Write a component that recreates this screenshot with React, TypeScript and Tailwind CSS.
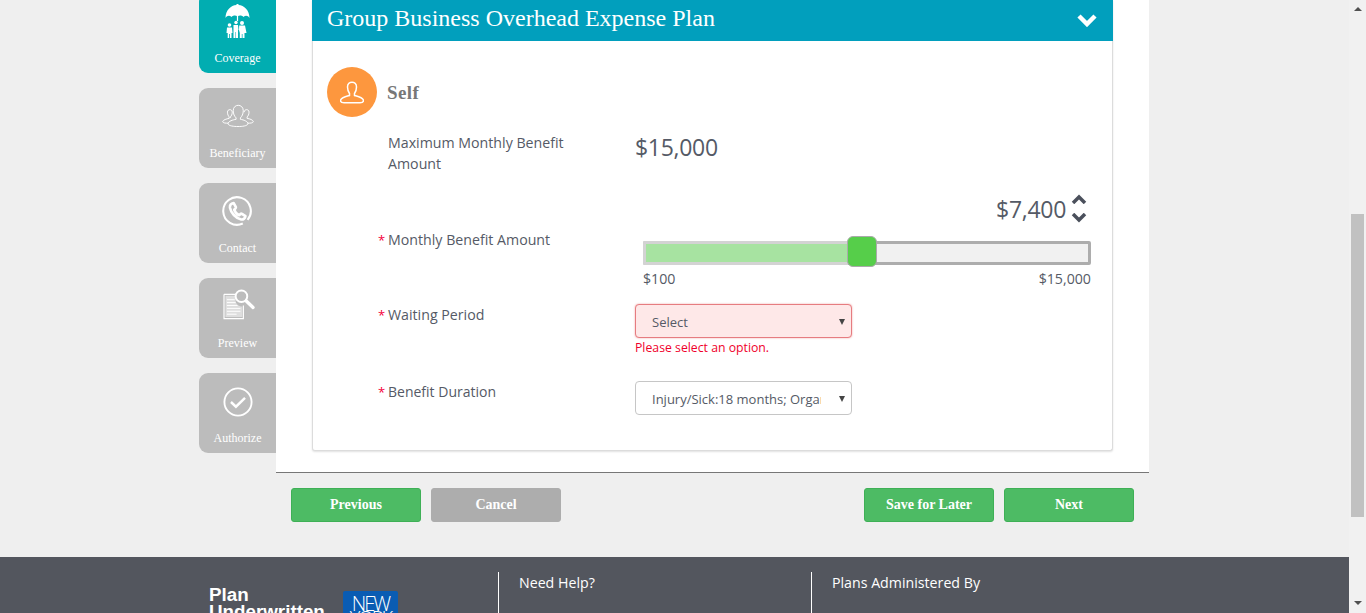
import React from "react";

const serif = "font-['Liberation_Serif','Times_New_Roman',serif]";
const sans = "font-['Open_Sans',sans-serif]";

function Umbrella() {
  return (
    <svg width="25" height="34" viewBox="0 0 25 34" fill="#fff" className="mb-[2px]">
      <path d="M0.500 14 C0.500 6 6 1.500 11.500 1 L11.500 0 L13.500 0 L13.500 1 C19 1.500 24.500 6 24.500 14 C23 11.500 20.500 11 18.500 13 C17 11 14 11 12.500 12.500 C11 11 8 11 6.500 13 C4.500 11 2 11.500 0.500 14 Z" />
      <rect x="11.900" y="12" width="1.200" height="5" />
      <circle cx="4.500" cy="21" r="1.800" />
      <circle cx="11" cy="18.500" r="1.700" />
      <circle cx="17" cy="19" r="2" />
      <path d="M2 23.500 L7 23.500 L7.500 29 L6.500 29 L6.500 34 L5 34 L5 30 L4.200 30 L4.200 34 L2.700 34 L2.700 29 L1.500 29 Z" />
      <path d="M8.500 21 L13 21 L13.500 26 L13 26 L13 34 L11 34 L11 28 L10.500 28 L10.500 34 L8.500 34 Z" />
      <path d="M14.200 21.500 L20 21.500 L21.500 29 L19.500 29 L19.500 34 L17.500 34 L17.500 30 L16.800 30 L16.800 34 L14.800 34 L14.800 29 L14 26 Z" />
    </svg>
  );
}

function People() {
  return (
    <svg width="34" height="23" viewBox="0 0 34 24" fill="none" stroke="#fff" strokeWidth="1" className="mb-[4px]">
      <path d="M6 8.500 C6 5 11 5 11 8.500 C11 11 10 12.500 9 13.500 L9 14.500 M6 8.500 C6 11 7 12.500 7.800 13.500 L7.800 15 C5 15.500 1.500 16.500 1 18.500 C1.500 20 4 20 7 20" />
      <path d="M23.500 8.500 C23.500 5 28.500 5 28.500 8.500 C28.500 11 27.500 12.500 26.500 13.500 L26.500 15 C29.500 15.500 32.500 16.500 33 18.500 C32.500 20 30 20 27 20" />
      <path d="M12 7 C12 -0.500 22.500 -0.500 22.500 7 C22.500 10.500 21 13 19.500 14.500 L19.500 16 C23 16.500 27 18 27.500 20.500 C27 23 21 23.500 17 23.500 C13 23.500 7 23 6.500 20.500 C7 18 11.500 16.500 15 16 L15 14.500 C13.500 13 12 10.500 12 7 Z" />
    </svg>
  );
}

function PhoneCircle() {
  return (
    <svg width="30" height="30" viewBox="0 0 32 32" fill="none" className="mb-[3px] mr-[1px]">
      <path d="M27.300 25.400 A14.700 14.700 0 1 0 22.200 29.300" stroke="#fff" strokeWidth="2.200" />
      <path d="M12.500 7.500 L14.800 11.800 C15.100 12.500 14.700 13 14.200 13.500 L13 14.700 C13.800 17 15.800 19.500 18.300 20.500 L19.700 19.200 C20.200 18.700 20.800 18.700 21.300 19 L25 21.500 C24.500 24 22.500 25.500 20.500 25 C14.500 23.500 9.500 18 8.500 12.500 C8.200 10 10 8 12.500 7.500 Z" stroke="#fff" strokeWidth="2.800" strokeLinejoin="round" />
    </svg>
  );
}

function Preview() {
  return (
    <svg width="33" height="31" viewBox="0 0 34 32" fill="none" className="mb-[5px] ml-[3px]">
      <path d="M1 5.500 L13 5.500 M1 5.500 L1 30.500 L21 30.500 L21 17" stroke="#fff" strokeWidth="1.200" />
      <path d="M2.500 7 H13 V12 C13 15 16 18 20 18 V29 H2.500 Z" fill="#dedede" />
      <path d="M4 11 H12 M4 14 H13 M4 17 H15 M4 20 H18 M4 23 H18 M4 26 H14" stroke="#fff" strokeWidth="1" />
      <circle cx="19" cy="7.500" r="6" stroke="#fff" strokeWidth="2" />
      <path d="M24 12.500 L31 19" stroke="#fff" strokeWidth="3.500" strokeLinecap="round" />
    </svg>
  );
}

function CheckCircle() {
  return (
    <svg width="30" height="30" viewBox="0 0 32 32" fill="none" className="mb-[1px]">
      <circle cx="16" cy="16" r="14.500" stroke="#fff" strokeWidth="2" />
      <path d="M8.500 16 L13.800 21 L23.500 11.500" stroke="#fff" strokeWidth="2.600" />
    </svg>
  );
}

function Tab({ label, icon, active }: { label: string; icon: React.ReactNode; active?: boolean }) {
  return (
    <div
      className={`h-[80px] w-[77px] rounded-l-[9px] flex flex-col items-center text-white text-[12px] leading-[14px] ${serif} ${
        active ? "bg-[#01adb1]" : "bg-[#bcbcbc]"
      }`}
    >
      <div className="h-[58px] w-full flex items-center justify-center">{icon}</div>
      <div>{label}</div>
    </div>
  );
}

function Caret() {
  return <span className="ml-auto mr-[6px] mb-[2px] w-0 h-0 border-x-[3px] border-x-transparent border-t-[6px] border-t-[#444] shrink-0" />;
}

function Btn({ children, gray }: { children: React.ReactNode; gray?: boolean }) {
  return (
    <div
      className={`w-[130px] h-[34px] pb-[1px] rounded-[3px] border flex items-center justify-center text-white font-bold text-[14px] ${serif} ${
        gray ? "bg-[#adadad] border-[#adadad]" : "bg-[#4dbb64] border-[#3eb056]"
      }`}
    >
      {children}
    </div>
  );
}

function Star() {
  return <span className="text-[#f5003a] w-[10px] text-[13px]">*</span>;
}

export default function App() {
  return (
    <div className="h-[613px] w-[1366px] overflow-hidden flex bg-[#efefef] text-[#555a66]">
      <div className="w-[1349px] flex flex-col">
        <div className="h-[557px] flex pl-[199px] shrink-0">
          <div className="w-[77px] flex flex-col gap-[15px] -mt-[7px]">
            <Tab label="Coverage" active icon={<Umbrella />} />
            <Tab label="Beneficiary" icon={<People />} />
            <Tab label="Contact" icon={<PhoneCircle />} />
            <Tab label="Preview" icon={<Preview />} />
            <Tab label="Authorize" icon={<CheckCircle />} />
          </div>
          <div className="w-[873px] flex flex-col">
            <div className="h-[472px] bg-white pl-[36px] pr-[36px]">
              <div className={`h-[451px] bg-white border border-t-0 border-[#dcdcdc] rounded-b-[3px] shadow-[0_1px_2px_rgba(0,0,0,0.12)] ${sans} text-[14.2px]`}>
                <div className="h-[41px] -mx-[1px] bg-[#019fbd] flex items-center justify-between pl-[15px] pr-[15px]">
                  <span className={`${serif} text-white text-[24px] leading-[36px] pb-[5px]`}>Group Business Overhead Expense Plan</span>
                  <svg width="22" height="14" viewBox="0 0 22 14" fill="none" className="mb-[2px]">
                    <path d="M3 3 L11 11 L19 3" stroke="#fff" strokeWidth="4.500" />
                  </svg>
                </div>
                <div className="pt-[26px] pl-[14px] flex items-center">
                  <div className="w-[50px] h-[50px] rounded-full bg-[#fd973e] flex items-center justify-center">
                    <svg width="24" height="24" viewBox="0 0 24 24" fill="none" stroke="#fff" strokeWidth="1.500">
                      <path d="M7.500 7 C7.500 0.500 16.500 0.500 16.500 7 C16.500 10 15.500 12 14.500 13.500 L14.500 15.500 C18 16.500 23 17.500 23.500 20.500 C23.500 22.500 22 22.800 20 22.800 L4 22.800 C2 22.800 0.500 22.500 0.500 20.500 C1 17.500 6 16.500 9.500 15.500 L9.500 13.500 C8.500 12 7.500 10 7.500 7 Z" />
                    </svg>
                  </div>
                  <span className={`${serif} font-bold text-[19px] text-[#777] ml-[10px] pt-[2px] tracking-[0.4px]`}>Self</span>
                </div>
                <div className="flex mt-[15px]">
                  <div className="ml-[75px] w-[247px] leading-[21px]">
                    Maximum Monthly Benefit
                    <br />
                    Amount
                  </div>
                  <div className="text-[23px] leading-[30px] tracking-[-0.3px]">$15,000</div>
                </div>
                <div className="flex items-center justify-end h-[30px] mt-[20px] pr-[25px]">
                  <span className="text-[23px] leading-[30px] mr-[5px] tracking-[-0.3px]">$7,400</span>
                  <div className="flex flex-col gap-[9px] items-center mb-[2px]">
                    <svg width="16" height="10" viewBox="0 0 16 10" fill="none">
                      <path d="M2 9 L8 3 L14 9" stroke="#4b505c" strokeWidth="3.500" />
                    </svg>
                    <svg width="16" height="10" viewBox="0 0 16 10" fill="none">
                      <path d="M2 1 L8 7 L14 1" stroke="#4b505c" strokeWidth="3.500" />
                    </svg>
                  </div>
                </div>
                <div className="flex mt-[6px]">
                  <div className="ml-[65px] w-[258px] flex leading-[20px]">
                    <Star />
                    <span>Monthly Benefit Amount</span>
                  </div>
                  <div className="w-[448px] ml-[7px] mt-[11px]">
                    <div className="relative h-[24px] bg-[#f1f1f1] border-[3px] border-[#adadad] rounded-[2px]">
                      <div className="h-[18px] w-[204px] bg-[#a7e3a1] -ml-[1px]" />
                      <div className="absolute -left-[3px] -top-[3px] -bottom-[3px] w-[205px] border-[3px] border-r-0 border-[#d3d3d3] rounded-l-[2px]" />
                      <div className="absolute left-[201px] -top-[8px] w-[30px] h-[31px] bg-[#56ce4a] border border-[#aaa] rounded-[6px]" />
                    </div>
                    <div className="flex justify-between mt-[4px] leading-[20px]">
                      <span>$100</span>
                      <span>$15,000</span>
                    </div>
                  </div>
                </div>
                <div className="flex mt-[15px]">
                  <div className="ml-[65px] w-[257px] flex pt-[1px] leading-[20px]">
                    <Star />
                    <span>Waiting Period</span>
                  </div>
                  <div>
                    <div className="w-[217px] h-[34px] bg-[#fee8e8] border border-[#e67c80] rounded-[4px] shadow-[0_0_2px_rgba(230,100,100,0.6)] flex items-center pl-[16px] pt-[3px] text-[13px] whitespace-nowrap overflow-hidden">
                      <span>Select</span>
                      <Caret />
                    </div>
                    <div className="text-[12.25px] leading-[16px] text-[#f0002b] mt-[2px]">Please select an option.</div>
                  </div>
                </div>
                <div className="flex mt-[25px]">
                  <div className="ml-[65px] w-[257px] flex pt-[1px] leading-[20px]">
                    <Star />
                    <span className="text-[14px]">Benefit Duration</span>
                  </div>
                  <div className="w-[217px] h-[34px] bg-white border border-[#c6c6c6] rounded-[4px] flex items-center pl-[16px] pt-[3px] text-[13px] whitespace-nowrap">
                    <span className="w-[169px] overflow-hidden">Injury/Sick:18 months; Organ</span>
                    <Caret />
                  </div>
                </div>
              </div>
            </div>
            <div className="border-t border-[#777] flex justify-between pt-[15px] px-[15px]">
              <div className="flex gap-[10px]">
                <Btn>Previous</Btn>
                <Btn gray>Cancel</Btn>
              </div>
              <div className="flex gap-[10px]">
                <Btn>Save for Later</Btn>
                <Btn>Next</Btn>
              </div>
            </div>
          </div>
        </div>
        <div className="flex-1 bg-[#53565e] text-white flex pl-[209px] pt-[15px] overflow-hidden font-['Open_Sans',sans-serif] text-[14.2px]">
          <div className="w-[289px] flex shrink-0">
            <div className="font-['Liberation_Sans',sans-serif] font-bold text-[18.8px] leading-[17px] pt-[14px] w-[134px]">
              Plan
              <br />
              Underwritten
            </div>
            <div className="w-[55px] h-[40px] -ml-[0px] bg-[#0a5cb3] rounded-[2px] mt-[19px] text-center font-light text-[20px] leading-[15px] pt-[5px] tracking-[-2px]">
              NEW
              <br />
              YORK
            </div>
          </div>
          <div className="w-[313px] border-l border-white pl-[20px] leading-[22px] shrink-0 h-[60px]">Need Help?</div>
          <div className="border-l border-white pl-[20px] leading-[22px] h-[60px]">Plans Administered By</div>
        </div>
      </div>
      <div className="w-[17px] bg-[#f1f1f1] flex flex-col items-center">
        <div className="mt-[7px] w-0 h-0 border-x-[4px] border-x-transparent border-b-[4px] border-b-[#505050]" />
        <div className="mt-[203px] w-[13px] h-[303px] bg-[#c1c1c1]" />
        <div className="mt-[84px] w-0 h-0 border-x-[4px] border-x-transparent border-t-[4px] border-t-[#505050]" />
      </div>
    </div>
  );
}
